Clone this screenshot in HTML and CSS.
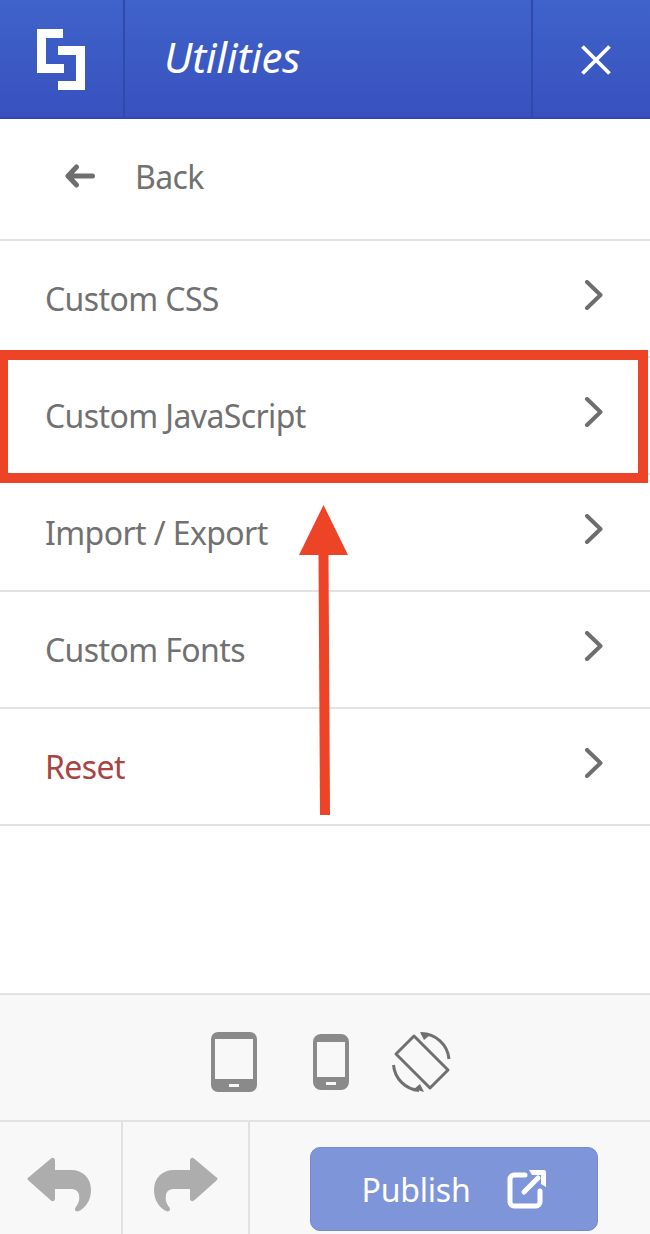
FILE: index.html
```html
<!DOCTYPE html>
<html lang="en">
<head>
<meta charset="utf-8">
<title>Utilities</title>
<link rel="stylesheet" href="styles.css">
</head>
<body>
<div class="app">
  <header class="header">
    <div class="logo-cell">
      <svg class="logo" width="48" height="62" viewBox="0 0 48 62"><path fill="#fff" d="M0 0H26V9H9V35H27V44H0Z"/><path fill="#fff" d="M21 17H48V61H21V52H39V26H21Z"/></svg>
    </div>
    <div class="title-cell"><span class="title">Utilities</span></div>
    <div class="close-cell">
      <svg width="30" height="30" viewBox="0 0 30 30"><path d="M1.500 1.500L28.500 28.500M28.500 1.500L1.500 28.500" stroke="#fff" stroke-width="3.800" fill="none"/></svg>
    </div>
  </header>
  <nav class="menu">
    <a class="back">
      <svg class="back-icon" width="30" height="24" viewBox="0 0 30 24"><path d="M11.500 3L3 12L11.500 21M3.500 12H27.500" stroke="#6e6e6e" stroke-width="5" stroke-linecap="round" stroke-linejoin="round" fill="none"/></svg>
      <span>Back</span>
    </a>
    <a class="row"><span>Custom CSS</span><svg class="chev" width="20" height="30" viewBox="0 0 20 30"><path d="M3 2L16.500 15L3 28" stroke="#6e6e6e" stroke-width="4" stroke-linecap="round" stroke-linejoin="round" fill="none"/></svg></a>
    <a class="row"><span>Custom JavaScript</span><svg class="chev" width="20" height="30" viewBox="0 0 20 30"><path d="M3 2L16.500 15L3 28" stroke="#6e6e6e" stroke-width="4" stroke-linecap="round" stroke-linejoin="round" fill="none"/></svg></a>
    <a class="row"><span>Import / Export</span><svg class="chev" width="20" height="30" viewBox="0 0 20 30"><path d="M3 2L16.500 15L3 28" stroke="#6e6e6e" stroke-width="4" stroke-linecap="round" stroke-linejoin="round" fill="none"/></svg></a>
    <a class="row"><span>Custom Fonts</span><svg class="chev" width="20" height="30" viewBox="0 0 20 30"><path d="M3 2L16.500 15L3 28" stroke="#6e6e6e" stroke-width="4" stroke-linecap="round" stroke-linejoin="round" fill="none"/></svg></a>
    <a class="row danger"><span>Reset</span><svg class="chev" width="20" height="30" viewBox="0 0 20 30"><path d="M3 2L16.500 15L3 28" stroke="#6e6e6e" stroke-width="4" stroke-linecap="round" stroke-linejoin="round" fill="none"/></svg></a>
  </nav>
  <footer class="footer">
    <div class="devices">
      <svg width="46" height="60" viewBox="0 0 46 60"><path fill="#8a8a8a" fill-rule="evenodd" d="M7 0H39A7 7 0 0 1 46 7V53A7 7 0 0 1 39 60H7A7 7 0 0 1 0 53V7A7 7 0 0 1 7 0ZM4 7V47H42V7ZM18 52V55H28V52Z"/></svg>
      <svg width="36" height="56" viewBox="0 0 36 56"><path fill="#8a8a8a" fill-rule="evenodd" d="M8 0H28A8 8 0 0 1 36 8V48A8 8 0 0 1 28 56H8A8 8 0 0 1 0 48V8A8 8 0 0 1 8 0ZM4 8V43H32V8ZM13 48V51H23V48Z"/></svg>
      <svg width="60" height="60" viewBox="0 0 60 60"><g fill="none" stroke="#707070" stroke-width="3" stroke-linejoin="round"><path d="M22 4L56 38L38 56L4 22Z"/><path d="M29 1.500A28 28 0 0 1 57 27"/><path d="M1.500 33A28 28 0 0 0 27 58.500"/></g><path fill="#707070" d="M28 0L38 3L32 8ZM32 60L22 57L28 52Z"/></svg>
    </div>
    <div class="actions">
      <button class="history">
        <svg class="undo" width="64" height="56" viewBox="0 0 64 56"><path fill="#adadad" d="M24 1.500C25.500 0 28 1 28 3.500V13H44C56 13 64 21 64 33C64 44 58 51 52 54C49 55.500 47 53 48.500 50.500C51 47 53 44 52 38C51.500 34 48 32 44 32H28V41.500C28 44 25.500 45 24 43.500L2 24C0 22 0 21 2 20Z"/></svg>
      </button>
      <button class="history">
        <svg class="redo" width="64" height="56" viewBox="0 0 64 56"><path fill="#adadad" d="M40 1.500C38.500 0 36 1 36 3.500V13H20C8 13 0 21 0 33C0 44 6 51 12 54C15 55.500 17 53 15.500 50.500C13 47 11 44 12 38C12.500 34 16 32 20 32H36V41.500C36 44 38.500 45 40 43.500L62 24C64 22 64 21 62 20Z"/></svg>
      </button>
      <div class="publish-wrap">
        <button class="publish">
          <span>Publish</span>
          <svg width="40" height="40" viewBox="0 0 40 40"><path d="M18 6H7A4 4 0 0 0 3 10V33A4 4 0 0 0 7 37H29A4 4 0 0 0 33 33V22" fill="none" stroke="#fff" stroke-width="5" stroke-linecap="round"/><path d="M17 23L31 9" fill="none" stroke="#fff" stroke-width="5" stroke-linecap="round"/><path fill="#fff" d="M22 1H37A2 2 0 0 1 39 3V18L34 15V6H25Z"/></svg>
        </button>
      </div>
    </div>
  </footer>
  <div class="callout"></div>
  <svg class="arrow" width="50" height="311" viewBox="0 0 50 311"><path fill="#ed4326" d="M24.500 0L49 50H0Z"/><path fill="#ed4326" d="M19.500 50H29.500L31 310H21Z"/></svg>
</div>
</body>
</html>
```
FILE: styles.css
```css
html, body { margin: 0; padding: 0; }
body { background: #fff; font-family: "Noto Sans", "Open Sans", sans-serif; color: #717171; }
.app { position: relative; width: 650px; height: 1234px; display: flex; flex-direction: column; overflow: hidden; }
.header { height: 119px; box-sizing: border-box; display: flex; background: linear-gradient(#3f63ca, #3851be); border-bottom: 2px solid #3248b0; }
.logo-cell { width: 125px; box-sizing: border-box; border-right: 2px solid #3049ad; display: flex; padding: 29px 0 0 37px; }
.title-cell { flex: 1; display: flex; align-items: center; padding: 0 0 4px 39px; }
.title { color: #fff; font-size: 42px; font-style: italic; letter-spacing: -0.3px; }
.close-cell { width: 119px; box-sizing: border-box; border-left: 2px solid #3049ad; display: flex; align-items: center; justify-content: center; padding: 2px 0 0 8px; }
.menu { display: flex; flex-direction: column; flex: 1; }
.back { height: 122px; box-sizing: border-box; border-bottom: 2px solid #e2e2e2; display: flex; align-items: center; font-size: 32px; letter-spacing: -0.6px; padding: 0 0 6px 65px; gap: 40px; }
.row { height: 117px; box-sizing: border-box; border-bottom: 2px solid #e2e2e2; display: flex; align-items: center; justify-content: space-between; font-size: 32px; letter-spacing: -0.6px; padding: 0 46px 0 45px; }
.row .chev { margin-top: -8px; }
.danger { color: #a94442; }
.footer { background: #f8f8f8; display: flex; flex-direction: column; border-top: 2px solid #e2e2e2; }
.devices { height: 127px; box-sizing: border-box; display: flex; align-items: center; justify-content: center; border-bottom: 2px solid #e2e2e2; padding: 8px 0 0 0; }
.devices svg:nth-child(1) { margin: 0 0 0 12px; }
.devices svg:nth-child(2) { margin: 0 0 0 56px; }
.devices svg:nth-child(3) { margin: 0 0 0 43px; }
.actions { height: 112px; display: flex; }
.history { width: 123px; height: 112px; box-sizing: border-box; background: none; border: 0; border-right: 2px solid #e2e2e2; display: flex; align-items: center; justify-content: center; padding: 0; }
.history + .history { width: 127px; }
.undo { margin: 14px 4px 0 0; }
.redo { margin-top: 14px; }
.publish-wrap { flex: 1; padding: 25px 52px 3px 60px; display: flex; }
.publish { width: 100%; background: #7e95d9; border: 1px solid #7489d2; border-radius: 10px; color: #fff; font-family: inherit; font-size: 32px; letter-spacing: -0.2px; display: flex; align-items: center; justify-content: center; gap: 36px; padding: 0; }
.callout { position: absolute; left: 0; top: 350px; width: 648px; height: 133px; box-sizing: border-box; border: 10px solid #ed4326; border-left-width: 8px; }
.arrow { position: absolute; left: 299px; top: 505px; }
```
